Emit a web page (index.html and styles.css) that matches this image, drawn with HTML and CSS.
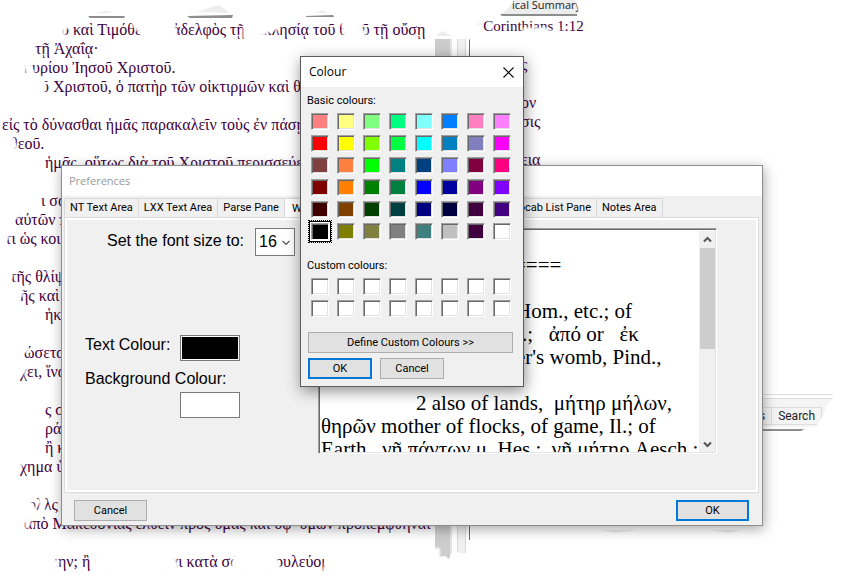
FILE: index.html
```html
<!DOCTYPE html>
<html lang="en">
<head>
<meta charset="utf-8">
<title>Preferences</title>
<link rel="stylesheet" href="styles.css">
</head>
<body>
<main class="desk">
  <section class="reader" lang="el">
    <p class="in60">υ καὶ Τιμόθεος ὁ ἀδελφὸς τῇ ἐκκλησίᾳ τοῦ θεοῦ τῇ οὔσῃ</p>
    <p class="in35">τῇ Ἀχαΐᾳ·</p>
    <p class="in25">κυρίου Ἰησοῦ Χριστοῦ.</p>
    <p class="in40">ῦ Χριστοῦ, ὁ πατὴρ τῶν οἰκτιρμῶν καὶ θεὸς</p>
    <p></p>
    <p class="in0">εἰς τὸ δύνασθαι ἡμᾶς παρακαλεῖν τοὺς ἐν πάσῃ</p>
    <p class="in10">θεοῦ.</p>
    <p class="in45">ἡμᾶς, οὕτως διὰ τοῦ Χριστοῦ περισσεύει</p>
    <p></p>
    <p class="in40">ι σα</p>
    <p class="in15">αὐτῶν π</p>
    <p class="in5">τι ὡς κοι</p>
    <p></p>
    <p class="in10">τῆς θλίψε</p>
    <p class="in20">ῆς καὶ</p>
    <p class="in45">ἡκα</p>
    <p></p>
    <p class="in25">ώσεται</p>
    <p class="in20">χει, ἵνα</p>
    <p></p>
    <p class="in45">ς σα</p>
    <p class="in45">ράσε</p>
    <p class="in45">ἢ κα</p>
    <p class="in20">χημα ὑ</p>
    <p></p>
    <p class="in20">πολλς ὑ</p>
    <p class="in25">ἀπὸ Μακεδονίας ἐλθεῖν πρὸς ὑμᾶς καὶ ὑφ’ ὑμῶν προπεμφθῆναι</p>
    <p></p>
    <p class="in40">άμην; ἢ ἃ βουλεύομαι κατὰ σάρκα βουλεύομαι</p>
  </section>
  <div class="pane-scroll"></div>
  <div class="splitter"></div>
  <section class="notes">
    <div class="notes-tab">ical Summary</div>
    <div class="notes-text">
      <p class="verse">2 Corinthians 1:12</p>
      <p></p>
      <p class="far">ς</p>
      <p></p>
      <p class="far">ον</p>
      <p class="far">σις</p>
      <p></p>
      <p class="far">εια</p>
    </div>
    <div class="notes-foot"><span>es</span><span>Search</span></div>
  </section>

  <svg class="torn" viewBox="0 0 850 588" aria-hidden="true">
    <defs><filter id="soft" x="-5%" y="-5%" width="110%" height="110%"><feGaussianBlur stdDeviation="0.8"/></filter></defs>
    <g fill="#fff" filter="url(#soft)">
      <path d="M56 20H70L69 28 63 31 67 37 60 39ZM131 20H174L178 38 160 41 141 38 139 32 133 27ZM243 20L283 21 280 29 270 32 262 36 243 39ZM341 20H362L363 30 368 32 364 36 344 41ZM429 0H496V20H480L470 40 452 34 429 30ZM468 14H482L479 26 482 31 474 36 466 34ZM524 27L534 28 545 27 550 31 560 28V36H520Z"/>
      <path d="M25 42L36 42 33 60H24ZM22 60H34L31 67 36 72 27 77ZM38 76H45V97H38ZM8 134H12L18 147 10 154ZM36 190H43V197L36 200ZM13 210H18V219H13ZM4 228H9V240H4ZM8 266H13V278H8ZM18 285H23V297H18ZM23 344H28V353H23ZM18 362H28L26 372 20 378ZM18 458H23L26 465 20 466ZM18 494H26L36 508 38 514H18ZM39 494H45V513H39ZM25 513H30L31 524 25 530ZM38 550H48L54 559 60 561 56 572H38ZM96 550H172L177 562 180 572H92ZM235 548H272L278 560 282 572H230ZM329 548H440V572H322Z"/>
    </g>
    <g fill="#8d8d8d">
      <path d="M88 16L125 16 124 18H90ZM187 16L233 15 232 18H190ZM305 16L333 15 334 17H307ZM500 14L577 14V16H502ZM762 429H812V431H762Z"/>
      <path fill="#ededed" d="M98 12L108 11 113 13H98ZM198 12L212 7 219 5 230 13ZM315 13L322 10 327 13ZM600 530L638 530 615 533ZM710 530H743L727 533ZM436 36L442 31 452 36Z"/>
    </g>
    <g fill="#fff">
      <path d="M831 388H850V440H798L802 430 816 426 823 416 826 406 833 398ZM435 552L439 557 445 556 449 559 452 552H458V570H433ZM456 553H467V570H456ZM467 540H475V570H467Z"/>
      <path d="M497 0H514L509 7 503 13H497ZM575 0H590V20H580L578 8Z"/>
    </g>
  </svg>

  <section class="window prefs" aria-label="Preferences">
    <header class="prefs-title">Preferences</header>
    <nav class="tabs">
      <button class="tab">NT Text Area</button>
      <button class="tab">LXX Text Area</button>
      <button class="tab">Parse Pane</button>
      <button class="tab current">W</button>
      <button class="tab">Vocab List Pane</button>
      <button class="tab">Notes Area</button>
    </nav>
    <div class="sheet">
      <form class="options">
        <div class="row size-row">
          <label for="size">Set the font size to:</label>
          <span class="size-box">
            <select id="size"><option>16</option></select>
            <svg width="8" height="6" viewBox="0 0 8 6" aria-hidden="true"><path d="M0.5 1L4 4.5 7.5 1" fill="none" stroke="#555" stroke-width="1.2"/></svg>
          </span>
        </div>
        <div class="row text-row">
          <label for="ink">Text Colour:</label>
          <button type="button" id="ink" class="chip ink"></button>
        </div>
        <div class="paper-row">
          <label for="paper">Background Colour:</label>
          <button type="button" id="paper" class="chip"></button>
        </div>
      </form>
      <div class="preview">
        <div class="preview-text">
          <p></p>
          <p class="rule">====</p>
          <p></p>
          <p class="hom">Hom., etc.; of</p>
          <p class="apo">.;&nbsp;&nbsp; ἀπό or&nbsp;&nbsp; ἐκ</p>
          <p class="womb">er's womb, Pind.,</p>
          <p>Aesch.</p>
          <p class="sense">2 also of lands,&nbsp; μήτηρ μήλων,</p>
          <p>θηρῶν mother of flocks, of game, Il.; of</p>
          <p>Earth,&nbsp; γῆ πάντων μ. Hes.;&nbsp; γῆ μήτηρ Aesch.;</p>
        </div>
        <div class="bar">
          <svg width="9" height="7" viewBox="0 0 9 7" aria-hidden="true"><path d="M1 5.5L4.5 2 8 5.5" fill="none" stroke="#555" stroke-width="2"/></svg>
          <div class="thumb"></div>
          <svg width="9" height="7" viewBox="0 0 9 7" aria-hidden="true"><path d="M1 1.5L4.5 5 8 1.5" fill="none" stroke="#555" stroke-width="2"/></svg>
        </div>
      </div>
    </div>
    <footer class="prefs-foot">
      <button class="btn">Cancel</button>
      <button class="btn main">OK</button>
    </footer>
  </section>

  <section class="window picker" aria-label="Colour">
    <header class="picker-title">
      <span>Colour</span>
      <button class="close" aria-label="Close"><svg width="11" height="11" viewBox="0 0 11 11"><path d="M0.5 0.5L10.5 10.5M10.5 0.5L0.5 10.5" stroke="#000" stroke-width="1.1"/></svg></button>
    </header>
    <div class="picker-body">
      <p class="caption">Basic colours:</p>
      <div class="swatches" id="basic"></div>
      <p class="caption custom">Custom colours:</p>
      <div class="swatches" id="custom"></div>
      <button class="btn define">Define Custom Colours &gt;&gt;</button>
      <div class="actions">
        <button class="btn main">OK</button>
        <button class="btn">Cancel</button>
      </div>
    </div>
  </section>
</main>
<script src="script.js"></script>
</body>
</html>
```
FILE: styles.css
```css
* { box-sizing: border-box; }
body { margin: 0; background: #fff; font: 11px/16px Roboto, "Liberation Sans", Arial, sans-serif; color: #000; }
p { margin: 0; }
button, select { font: inherit; color: inherit; margin: 0; padding: 0; }

.desk { position: relative; display: flex; min-height: 100vh; overflow: hidden; }

/* text behind the windows */
.reader { width: 435px; padding-top: 20px; font: 16px/19px "Liberation Serif", "Times New Roman", serif; color: #400040; white-space: nowrap; }
.reader p, .notes-text p { height: 19px; }
.in0 { padding-left: 2px; }
.in5 { padding-left: 5px; }
.in10 { padding-left: 10px; }
.in15 { padding-left: 15px; }
.in20 { padding-left: 20px; }
.in25 { padding-left: 24px; }
.in35 { padding-left: 35px; }
.in40 { padding-left: 41px; }
.in45 { padding-left: 45px; }
.in60 { padding-left: 61px; }
.pane-scroll { width: 17px; margin: 39px 0 28px; background: #cdcdcd; border-right: 2px solid #e4e4e4; }
.splitter { width: 13px; margin: 39px 0 28px 5px; border-left: 1px solid #d8d8d8; border-right: 1px solid #696969; background: linear-gradient(to right, #f0f0f0 0 7px, #d8d8d8 7px 8px, #fff 8px); }
.notes { flex: 1; display: flex; flex-direction: column; color: #400040; }
.notes-tab { width: 76px; height: 14px; margin: 0 0 3px 31px; padding-left: 11px; background: #ededed; font: 11px/9px "Open Sans", "Noto Sans", sans-serif; white-space: nowrap; color: #222; }
.notes-text { height: 377px; font: 16px/19px "Liberation Serif", "Times New Roman", serif; }
.notes-text .verse { padding-left: 2px; font-size: 15px; }
.notes-text .far { padding-left: 51px; }
.notes-foot { display: flex; justify-content: flex-end; height: 38px; padding: 12px 28px 8px 0; border-top: 1px solid #ddd; background: linear-gradient(#fff 0 3px, #ddd 3px 4px, #f4f4f4 4px 32px, #fff 32px); color: #222; }
.notes-foot span { height: 18px; padding: 0 6px; border: 1px solid #ddd; border-left: 0; line-height: 17px; font-size: 12px; }
.torn { position: absolute; left: 0; top: 0; width: 850px; height: 588px; }

.window { position: absolute; display: flex; flex-direction: column; background: #f0f0f0; }
.btn { height: 21px; background: #e1e1e1; border: 1px solid #adadad; }
.btn.main { border: 2px solid #0078d7; }

/* preferences window */
.prefs { left: 61px; right: 87px; top: 165px; border: 1px solid #8c8c8c; box-shadow: 1px 3px 12px rgba(0,0,0,.35); }
.prefs-title { height: 30px; padding: 0 7px; background: #fff; color: #999; font: 11px/30px "Open Sans", "Noto Sans", sans-serif; }
.tabs { display: flex; padding: 2px 2px 0; height: 21px; }
.tab { height: 19px; border: 1px solid #d9d9d9; border-left: 0; border-bottom: 0; background: #f0f0f0; padding: 0 5px; white-space: nowrap; }
.tab:first-child { border-left: 1px solid #d9d9d9; }
.tab.current { width: 222px; height: 20px; background: #fff; text-align: left; padding-left: 7px; }
.sheet { display: flex; margin: 0 3px 0 2px; border: 1px solid #dcdcdc; box-shadow: inset 0 0 0 2px #fff; padding: 10px 41px 38px 20px; }
.options { flex: none; width: 233px; font: 16px/20px "Liberation Sans", Arial, sans-serif; }
.row { display: flex; }
.size-row { justify-content: flex-end; padding-right: 23px; gap: 11px; }
.size-row label { padding-top: 3px; }
.size-box { position: relative; width: 40px; height: 28px; }
.size-box select { width: 100%; height: 100%; appearance: none; border: 1px solid #7a7a7a; border-radius: 0; background: #fff; padding-left: 3px; }
.size-box svg { position: absolute; right: 5px; top: 12px; }
.text-row { margin-top: 79px; justify-content: space-between; padding-right: 78px; }
.paper-row { display: flex; flex-direction: column; margin-top: 8px; }
.paper-row .chip { margin: 3px 0 0 95px; }
.chip { width: 60px; height: 26px; background: #fff; border: 1px solid #7a7a7a; }
.chip.ink { background: #000; box-shadow: inset 0 0 0 1px #fff; }
.preview { flex: 1; min-width: 0; display: flex; height: 226px; background: #fff; border: 1px solid #a0a0a0; border-right-color: #fff; border-bottom-color: #fff; box-shadow: inset 1px 1px #696969, inset -1px -1px #e3e3e3; padding: 2px 1px 1px 2px; }
.preview-text { flex: 1; min-width: 0; overflow: hidden; font: 21px/23px "Liberation Serif", "Times New Roman", serif; white-space: nowrap; }
.preview-text p { height: 23px; }
.preview-text .rule { padding-left: 193px; }
.preview-text .hom { padding-left: 195px; }
.preview-text .apo { padding-left: 201px; }
.preview-text .womb { padding-left: 195px; }
.preview-text .sense { padding-left: 95px; }
.bar { flex: none; width: 16px; display: flex; flex-direction: column; align-items: center; background: #f0f0f0; padding: 5px 0 4px; }
.thumb { width: 15px; height: 101px; margin: 5px 0 auto; background: #cdcdcd; }
.prefs-foot { display: flex; justify-content: space-between; padding: 7px 13px 4px 12px; }
.prefs-foot .btn { width: 73px; }

/* colour picker */
.picker { left: 300px; top: 56px; width: 224px; border: 1px solid #5c5c5c; box-shadow: 1px 4px 14px rgba(0,0,0,.45); }
.picker-title { display: flex; justify-content: space-between; align-items: center; height: 30px; padding: 0 9px 0 8px; background: #fff; font: 12px/30px "Open Sans", "Noto Sans", sans-serif; }
.close { display: flex; background: none; border: 0; }
.picker-body { padding: 6px 10px 7px 7px; }
.caption { height: 16px; margin-left: -1px; }
.swatches { display: grid; grid-template-columns: repeat(8, 18px); gap: 5px 8px; padding: 4px 0 0 3px; }
.custom { margin-top: 18px; }
.swatch { appearance: none; width: 18px; height: 17px; margin: 0; background: var(--fill); border: 1px solid #a0a0a0; border-right-color: #fff; border-bottom-color: #fff; box-shadow: inset 1px 1px #696969, inset -1px -1px #e3e3e3; }
.swatch:checked { box-shadow: inset 1px 1px #696969, 0 0 0 1px #fff, 0 0 0 2px #000; outline: 1px dotted #000; outline-offset: 2px; }
.define { display: block; width: 100%; margin: 15px 0 5px; }
.actions { display: flex; gap: 8px; }
.actions .btn { width: 64px; }
```
FILE: script.js
```js
const basic = [
  "#ff8080", "#ffff80", "#80ff80", "#00ff80", "#80ffff", "#0080ff", "#ff80c0", "#ff80ff",
  "#ff0000", "#ffff00", "#80ff00", "#00ff40", "#00ffff", "#0080c0", "#8080c0", "#ff00ff",
  "#804040", "#ff8040", "#00ff00", "#008080", "#004080", "#8080ff", "#800040", "#ff0080",
  "#800000", "#ff8000", "#008000", "#008040", "#0000ff", "#0000a0", "#800080", "#8000ff",
  "#400000", "#804000", "#004000", "#004040", "#000080", "#000040", "#400040", "#400080",
  "#000000", "#808000", "#808040", "#808080", "#408080", "#c0c0c0", "#400040", "#ffffff"
];

function fill(id, colours, chosen) {
  const box = document.getElementById(id);
  colours.forEach((colour, i) => {
    const cell = document.createElement("input");
    cell.type = "radio";
    cell.name = "colour";
    cell.className = "swatch";
    cell.setAttribute("aria-label", colour);
    cell.style.setProperty("--fill", colour);
    cell.checked = i === chosen;
    box.append(cell);
  });
}

fill("basic", basic, 40);
fill("custom", Array(16).fill("#ffffff"), -1);
```
